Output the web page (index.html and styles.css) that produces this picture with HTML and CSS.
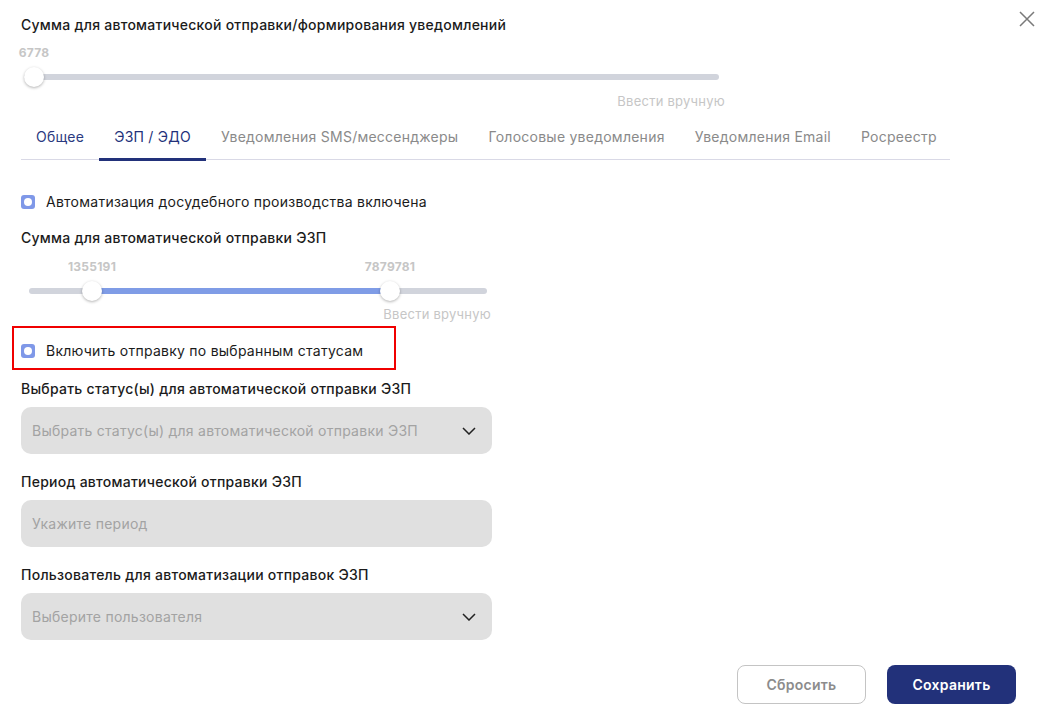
FILE: index.html
```html
<!DOCTYPE html>
<html lang="ru">
<head>
    <meta charset="UTF-8">
    <meta name="viewport" content="width=device-width, initial-scale=1.0">
    <title>Настройки автоматизации</title>
    <link rel="stylesheet" href="styles.css">
</head>
<body>
    <div class="dialog">
        <button class="close-btn" aria-label="Закрыть">
            <svg width="16" height="16" viewBox="0 0 16 16"><path d="M1 1L15 15M15 1L1 15" stroke="#7a7a7a" stroke-width="1.5" fill="none"/></svg>
        </button>

        <!-- Общая сумма -->
        <div class="field-label">Сумма для автоматической отправки/формирования уведомлений</div>
        <div class="range range-wide">
            <div class="range-values">
                <span class="range-value" style="left: 10px">6778</span>
            </div>
            <div class="range-track">
                <span class="range-thumb" style="left: 10px"></span>
            </div>
            <div class="range-manual">Ввести вручную</div>
        </div>

        <!-- Вкладки -->
        <div class="tabs">
            <div class="tab tab-done">Общее</div>
            <div class="tab active">ЭЗП / ЭДО</div>
            <div class="tab">Уведомления SMS/мессенджеры</div>
            <div class="tab">Голосовые уведомления</div>
            <div class="tab">Уведомления Email</div>
            <div class="tab">Росреестр</div>
        </div>

        <div class="tab-content">
            <label class="checkbox-row first">
                <span class="checkbox"></span>
                Автоматизация досудебного производства включена
            </label>

            <div class="field-label mt16">Сумма для автоматической отправки ЭЗП</div>
            <div class="range range-narrow">
                <div class="range-values">
                    <span class="range-value" style="left: 63px">1355191</span>
                    <span class="range-value" style="left: 361px">7879781</span>
                </div>
                <div class="range-track">
                    <span class="range-fill" style="left: 63px; width: 298px"></span>
                    <span class="range-thumb" style="left: 63px"></span>
                    <span class="range-thumb" style="left: 361px"></span>
                </div>
                <div class="range-manual">Ввести вручную</div>
            </div>

            <div class="highlight">
                <label class="checkbox-row">
                    <span class="checkbox"></span>
                    Включить отправку по выбранным статусам
                </label>
            </div>

            <div class="field-label mt9">Выбрать статус(ы) для автоматической отправки ЭЗП</div>
            <div class="input-box">
                <span class="placeholder">Выбрать статус(ы) для автоматической отправки ЭЗП</span>
                <svg class="chevron" width="14" height="8" viewBox="0 0 14 8"><path d="M1 1L7 7L13 1" stroke="#222" stroke-width="1.5" fill="none"/></svg>
            </div>

            <div class="field-label mt18">Период автоматической отправки ЭЗП</div>
            <div class="input-box">
                <span class="placeholder">Укажите период</span>
            </div>

            <div class="field-label mt18">Пользователь для автоматизации отправок ЭЗП</div>
            <div class="input-box">
                <span class="placeholder">Выберите пользователя</span>
                <svg class="chevron" width="14" height="8" viewBox="0 0 14 8"><path d="M1 1L7 7L13 1" stroke="#222" stroke-width="1.5" fill="none"/></svg>
            </div>
        </div>

        <div class="footer">
            <button class="btn btn-secondary">Сбросить</button>
            <button class="btn btn-primary">Сохранить</button>
        </div>
    </div>
</body>
</html>
```

FILE: styles.css
```css
* {
    margin: 0;
    padding: 0;
    box-sizing: border-box;
}

body {
    font-family: Inter, 'Noto Sans', sans-serif;
    letter-spacing: 0.25px;
    background: white;
    color: #1b1b1b;
    height: 100vh;
    overflow: hidden;
}

.dialog {
    position: relative;
    padding: 15px 28px 0 21px;
}

.close-btn {
    position: absolute;
    top: 11px;
    right: 9px;
    border: none;
    background: transparent;
    cursor: pointer;
    line-height: 0;
}

.field-label {
    font-size: 14px;
    line-height: 20px;
    font-weight: 500;
    color: #1b1b1b;
}

.mt9 { margin-top: 9px; }
.mt16 { margin-top: 16px; }
.mt18 { margin-top: 18px; }

/* слайдеры */
.range-wide {
    width: 701px;
    margin-left: 3px;
    margin-top: 10px;
}

.range-narrow {
    width: 462px;
    margin-left: 8px;
    margin-top: 11px;
}

.range-values {
    position: relative;
    height: 16px;
    margin-right: 6px;
}

.range-narrow .range-values {
    margin-right: 4px;
}

.range-value {
    position: absolute;
    top: 0;
    transform: translateX(-50%);
    font-size: 12px;
    line-height: 16px;
    font-weight: 700;
    color: #c6c6c6;
}

.range-track {
    position: relative;
    height: 6px;
    margin: 13px 6px 0 0;
    background: #d1d4dc;
    border-radius: 3px;
}

.range-narrow .range-track {
    margin-right: 4px;
    margin-top: 13px;
}

.range-fill {
    position: absolute;
    top: 0;
    height: 6px;
    background: #7f9ce6;
}

.range-thumb {
    position: absolute;
    top: 50%;
    width: 20px;
    height: 20px;
    margin: -10px 0 0 -10px;
    background: white;
    border-radius: 50%;
    box-shadow: 0 1px 3px rgba(0,0,0,0.3);
}

.range-manual {
    text-align: right;
    font-size: 13px;
    line-height: 16px;
    color: #c6c6c6;
    margin-top: 13px;
}

.range-narrow .range-manual {
    margin-top: 12px;
}

/* вкладки */
.tabs {
    display: flex;
    width: 929px;
    margin-top: 18px;
    border-bottom: 1px solid #d9d9e6;
}

.tab {
    padding: 0 15px 11px;
    font-size: 14px;
    line-height: 20px;
    color: #8a8a8a;
    border-bottom: 3px solid transparent;
    margin-bottom: -2px;
    white-space: nowrap;
    cursor: pointer;
}

.tab-done {
    color: #2b3a80;
}

.tab.active {
    color: #22317a;
    border-bottom-color: #22317a;
}

/* чекбоксы */
.checkbox-row {
    display: flex;
    align-items: center;
    gap: 11px;
    font-size: 14px;
    line-height: 20px;
    color: #1b1b1b;
}

.checkbox-row.first {
    margin-top: 32px;
}

.checkbox {
    width: 14px;
    height: 14px;
    border-radius: 3px;
    background: #7f98e8;
    display: flex;
    align-items: center;
    justify-content: center;
}

.checkbox::after {
    content: '';
    width: 8px;
    height: 8px;
    border-radius: 50%;
    background: white;
}

.highlight {
    width: 384px;
    margin: 4px 0 0 -9px;
    padding: 13px 0 7px 7px;
    border: 2px solid #f00000;
}

/* поля */
.input-box {
    width: 471px;
    height: 47px;
    margin-top: 8px;
    padding: 0 16px 0 11px;
    background: #e0e0e0;
    border-radius: 10px;
    display: flex;
    align-items: center;
    justify-content: space-between;
}

.placeholder {
    font-size: 14px;
    color: #a3a3a3;
}

.chevron {
    flex-shrink: 0;
}

/* кнопки */
.footer {
    display: flex;
    justify-content: flex-end;
    gap: 21px;
    margin-top: 25px;
}

.btn {
    width: 129px;
    height: 39px;
    border-radius: 8px;
    font-family: Inter, sans-serif;
    font-size: 14px;
    font-weight: 600;
    letter-spacing: 0.25px;
    cursor: pointer;
}

.btn-secondary {
    background: white;
    color: #8c8c8c;
    border: 1px solid #c4c4c4;
}

.btn-primary {
    background: #22317a;
    color: white;
    border: none;
}
```
